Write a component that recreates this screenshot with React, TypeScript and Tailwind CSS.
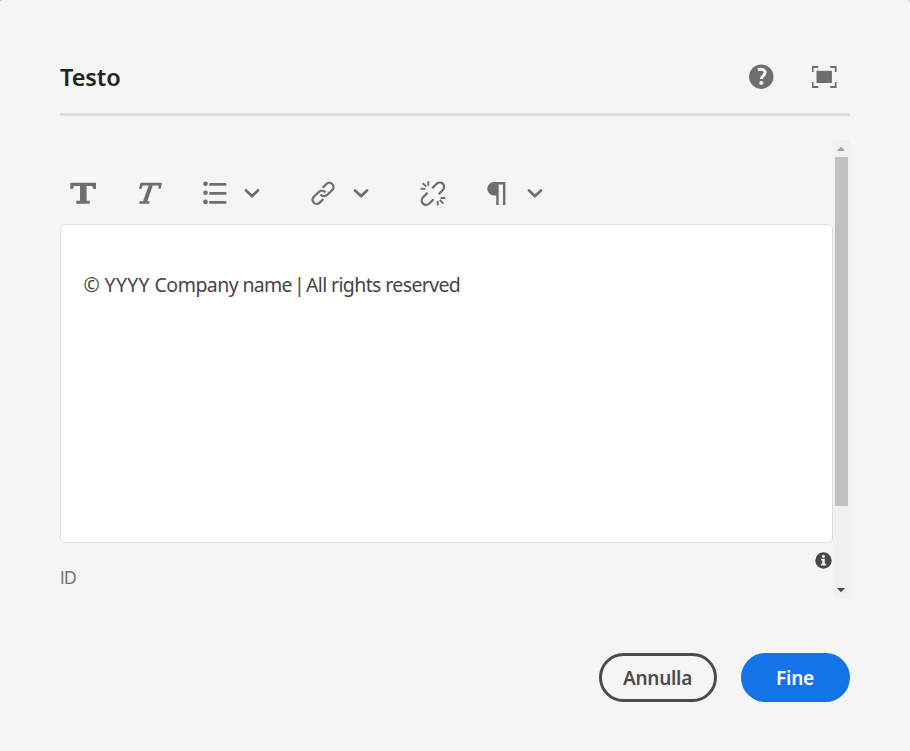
import React from "react";

function Chevron() {
  return (
    <svg width="16" height="10" viewBox="0 0 16 10" fill="none" stroke="#6e6e6e" strokeWidth="2.700" strokeLinecap="round" strokeLinejoin="miter">
      <path d="M2 2.400 8 8.100 14 2.400" />
    </svg>
  );
}

function BoldIcon() {
  return (
    <svg width="26" height="22" viewBox="0 0 26 22" fill="#6e6e6e">
      <path d="M.3 .8h25.700v6.200h-2.400L22 3.900H16.600v14.900H19.800V21.800H6.300V18.800H10V3.900H4L2.600 7H.3z" />
    </svg>
  );
}

function ItalicIcon() {
  return (
    <svg width="24" height="22" viewBox="0 -.3 24 22" fill="#6e6e6e">
      <path d="M2.500 .5H24L22.600 6.500H20.400L20.600 3.200H14.800L9.300 18.900H11.700L11 21.500H1L1.700 18.900H5.100L10.600 3.200H5L3.300 6.500H.9z" />
    </svg>
  );
}

function ListIcon() {
  return (
    <svg width="24" height="24" viewBox="0 0 24 24" fill="#6e6e6e">
      <circle cx="2.500" cy="2.700" r="2.300" />
      <circle cx="2.500" cy="11.800" r="2.300" />
      <circle cx="2.500" cy="20.900" r="2.300" />
      <rect x="6.200" y="2.100" width="17.200" height="2.700" rx="0.800" />
      <rect x="6.200" y="11.100" width="17.200" height="2.700" rx="0.800" />
      <rect x="6.200" y="20.100" width="17.200" height="2.700" rx="0.800" />
    </svg>
  );
}

function LinkIcon() {
  return (
    <svg width="24" height="24" viewBox="0 -.4 24 24" fill="none" stroke="#6e6e6e" strokeWidth="2.200">
      <path d="M11.600 6.400 15 3C16.700 1.300 19.300 .9 21.100 2.600 23 4.300 22.900 7 21.200 8.700L16.400 13.300C14.400 15.200 11.100 15.200 9.500 12.900" />
      <path d="M12.400 17.600 9 21C7.300 22.700 4.700 23.100 2.900 21.400 1 19.700 1.100 17 2.800 15.300L7.600 10.700C9.600 8.800 12.900 8.800 14.500 11.100" />
    </svg>
  );
}

function UnlinkIcon() {
  return (
    <svg width="26" height="26" viewBox="0 -.4 26 26" fill="none" stroke="#6e6e6e">
      <g strokeWidth="2.300">
        <path d="m12.200 7.800 3.900-4c1.900-1.900 4.800-2.300 6.700-.5s1.700 4.700-.2 6.600l-4 3.900" />
        <path d="m7.600 12.400-4.300 4.200c-1.900 1.900-2.100 4.700-.3 6.600 1.800 1.800 4.700 1.500 6.600-.4l3.900-4" />
      </g>
      <path d="M8.300.8v4.600M2.700 2.800l3.600 3.400M.6 8.300l4.700.2M17.700 20.600v4.600M19.800 19.600l3.600 3.600M20.600 17.600h4.700" strokeWidth="1.900" />
    </svg>
  );
}

function ParagraphIcon() {
  return (
    <svg width="19" height="24" viewBox="0 -1 19 24" fill="#6e6e6e">
      <path d="M7 0H18.400V23H16V2.400H11.700V23H9.200V13.500H7A6.750 6.750 0 0 1 7 0z" />
    </svg>
  );
}

export default function App() {
  return (
    <div className="bg-[#c4c4c4]">
      <div className="flex h-[751px] w-[910px] flex-col rounded-t-[3px] bg-[#f5f5f5] px-[60px] pt-[40px] font-['Noto_Sans',sans-serif]">
        <header className="flex h-[76px] shrink-0 items-center justify-between border-b-[3px] border-[#dedede] pr-[13px]">
          <h1 className="text-[23.500px] font-semibold leading-[30px] tracking-[-0.100px] text-[#222222]">Testo</h1>
          <div className="flex items-center gap-[38px]">
            <svg width="25" height="25" viewBox="0 0 25 25">
              <circle cx="12.300" cy="12.700" r="12.200" fill="#6e6e6e" />
              <path d="M8.800 5.900c3.900-1.700 7.400-.1 7.300 2.700 0 3-3.700 3.400-3.700 6.300" fill="none" stroke="#f4f4f4" strokeWidth="3" />
              <circle cx="12.300" cy="19" r="2.100" fill="#f4f4f4" />
            </svg>
            <svg width="25" height="22" viewBox="0.300 0 25 22">
              <path d="M1 6V1h5.500M18.500 1H24v5M24 16v5h-5.500M6.500 21H1v-5" fill="none" stroke="#6e6e6e" strokeWidth="1.800" />
              <rect x="4.800" y="4.800" width="15.400" height="12.200" fill="#6e6e6e" />
            </svg>
          </div>
        </header>

        <main className="mt-[24px] flex h-[459px] shrink-0">
          <section className="flex w-[773px] flex-col">
            <div className="mt-[26px] mb-[4px] flex h-[54px] shrink-0 items-center pl-[10px]">
              <BoldIcon />
              <div className="ml-[42px]"><ItalicIcon /></div>
              <div className="ml-[41px] flex items-center gap-[17px]"><ListIcon /><Chevron /></div>
              <div className="ml-[51px] flex items-center gap-[18px]"><LinkIcon /><Chevron /></div>
              <div className="ml-[51px]"><UnlinkIcon /></div>
              <div className="ml-[41px] flex items-center gap-[21px]"><ParagraphIcon /><Chevron /></div>
            </div>
            <div className="h-[319px] shrink-0 rounded-[5px] border border-[#dfdfdf] bg-white pt-[46px] pl-[22.500px]">
              <p className="whitespace-pre text-[19.500px] leading-[28px] tracking-[-0.500px] text-[#454545]">
                ©<span className="tracking-[0.300px]"> YYYY</span><span className="tracking-[-0.500px]"> Company</span><span className="tracking-[-0.800px]"> name</span><span className="tracking-[-2.600px]"> |</span><span className="tracking-[-1.400px]"> </span><span className="tracking-[-0.620px]">All rights reserved</span>
              </p>
            </div>
            <div className="flex justify-between pr-px">
              <span className="mt-[23px] font-[Lato,sans-serif] text-[16.500px] leading-[24px] tracking-[-0.500px] text-[#747474]">ID</span>
              <svg className="mt-[9px]" width="17" height="17" viewBox="0 0 17 17">
                <circle cx="8.500" cy="8.500" r="8.200" fill="#484848" />
                <circle cx="8.400" cy="4.200" r="1.500" fill="#f4f4f4" />
                <path d="M6 6.700h3.800v5.100h1.400v1.700H5.900v-1.700h1.400V8.400H6z" fill="#f4f4f4" />
              </svg>
            </div>
          </section>
          <div className="flex w-[17px] flex-col items-center bg-[#f1f1f1]">
            <svg className="shrink-0" width="17" height="17" viewBox="0 0 17 17"><path d="m4 11 4-4.300 4 4.300z" fill="#a2a2a2" /></svg>
            <div className="h-[349px] w-[13px] shrink-0 bg-[#c1c1c1]" />
            <svg className="mt-auto shrink-0" width="17" height="17" viewBox="0 0 17 17"><path d="m4 6 4 4.200 4-4.200z" fill="#484848" /></svg>
          </div>
        </main>

        <footer className="mt-[54px] flex justify-end gap-[24px] text-[19px] font-semibold leading-[24px]">
          <button className="h-[49px] w-[118px] rounded-full border-[3px] border-[#4b4b4b] pr-[1px] tracking-[-0.300px] text-[#4b4b4b]">Annulla</button>
          <button className="h-[49px] w-[109px] rounded-full bg-[#1473e6] pr-[1px] tracking-[-0.200px] text-white">Fine</button>
        </footer>
      </div>
    </div>
  );
}
